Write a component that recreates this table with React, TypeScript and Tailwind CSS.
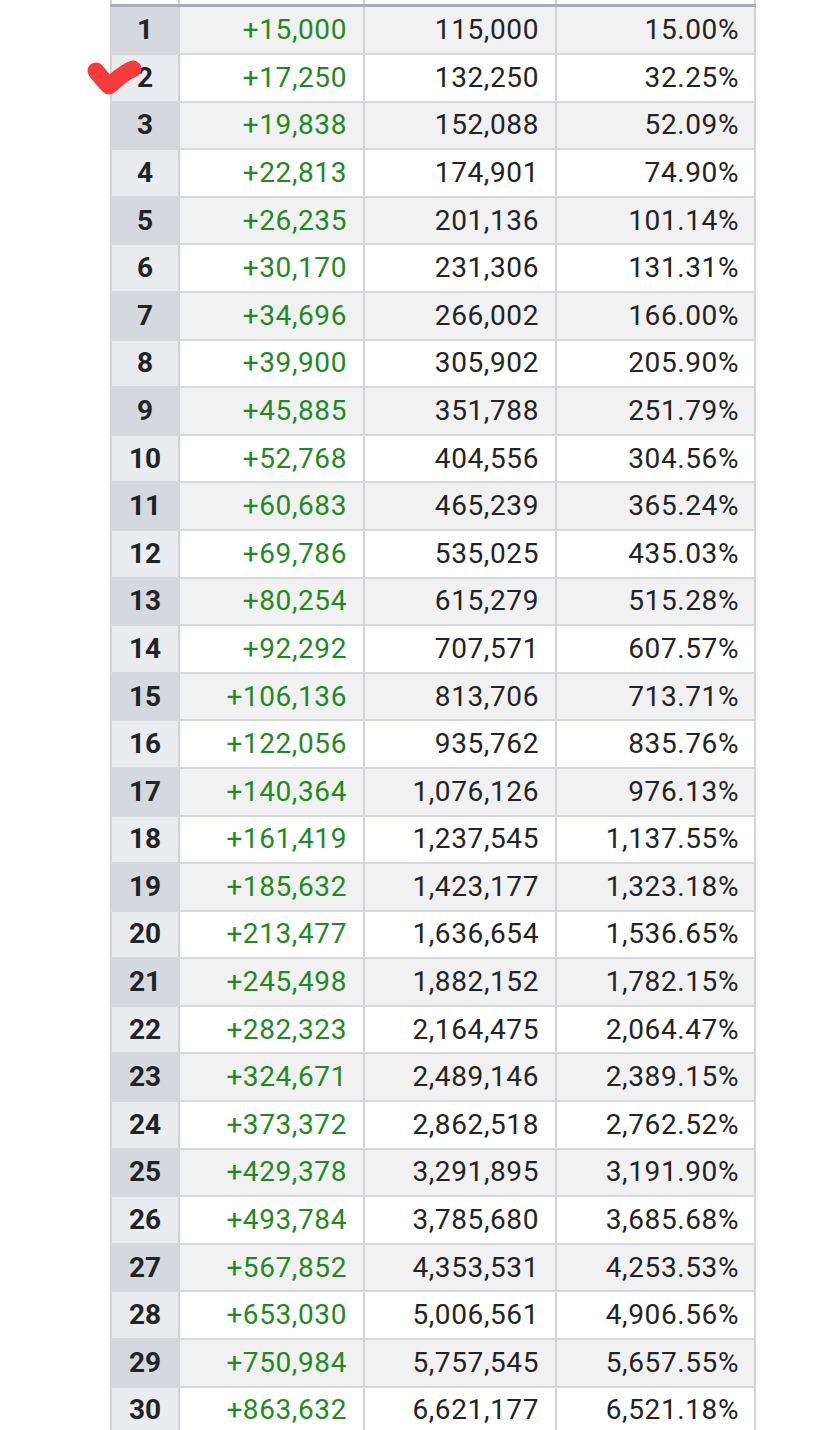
const rows: [string, string, string][] = [
  ['+15,000', '115,000', '15.00%'],
  ['+17,250', '132,250', '32.25%'],
  ['+19,838', '152,088', '52.09%'],
  ['+22,813', '174,901', '74.90%'],
  ['+26,235', '201,136', '101.14%'],
  ['+30,170', '231,306', '131.31%'],
  ['+34,696', '266,002', '166.00%'],
  ['+39,900', '305,902', '205.90%'],
  ['+45,885', '351,788', '251.79%'],
  ['+52,768', '404,556', '304.56%'],
  ['+60,683', '465,239', '365.24%'],
  ['+69,786', '535,025', '435.03%'],
  ['+80,254', '615,279', '515.28%'],
  ['+92,292', '707,571', '607.57%'],
  ['+106,136', '813,706', '713.71%'],
  ['+122,056', '935,762', '835.76%'],
  ['+140,364', '1,076,126', '976.13%'],
  ['+161,419', '1,237,545', '1,137.55%'],
  ['+185,632', '1,423,177', '1,323.18%'],
  ['+213,477', '1,636,654', '1,536.65%'],
  ['+245,498', '1,882,152', '1,782.15%'],
  ['+282,323', '2,164,475', '2,064.47%'],
  ['+324,671', '2,489,146', '2,389.15%'],
  ['+373,372', '2,862,518', '2,762.52%'],
  ['+429,378', '3,291,895', '3,191.90%'],
  ['+493,784', '3,785,680', '3,685.68%'],
  ['+567,852', '4,353,531', '4,253.53%'],
  ['+653,030', '5,006,561', '4,906.56%'],
  ['+750,984', '5,757,545', '5,657.55%'],
  ['+863,632', '6,621,177', '6,521.18%'],
];

const grid = 'grid grid-cols-[68px_185px_192px_201px]';

export default function App() {
  return (
    <div className="w-[835px] h-[1430px] overflow-hidden bg-white pl-[110px] font-['Roboto',sans-serif] text-[28px] text-[#222324]">
      <div className="relative w-[646px]">
        {/* tail of the previous row */}
        <div className={`${grid} h-[4px]`}>
          <div className="border-l-2 border-[#d0d4d9]" />
          <div className="border-l-2 border-[#d0d4d9]" />
          <div className="border-l-2 border-[#d0d4d9]" />
          <div className="border-l-2 border-r-2 border-[#d0d4d9]" />
        </div>
        <div className="h-[3px] bg-[#a9adb3]" />

        {rows.map(([gain, total, pct], i) => {
          const odd = i % 2 === 0;
          return (
            <div
              key={i}
              className={`${grid} ${i === 0 ? 'h-[48px]' : 'h-[47.6px]'} border-b-2 border-[#d5d8dc] box-border`}
            >
              <div
                className={`flex items-center justify-center border-l-2 border-[#d0d4d9] font-bold ${odd ? 'bg-[#d5d8dc]' : 'bg-[#eaecf0]'}`}
              >
                {i + 1}
              </div>
              <div
                className={`flex items-center justify-end pr-[16px] tracking-[0.6px] border-l-2 border-[#d0d4d9] text-[#1f8a24] ${odd ? 'bg-[#f1f1f1]' : 'bg-white'}`}
              >
                {gain}
              </div>
              <div
                className={`flex items-center justify-end pr-[16px] tracking-[0.6px] border-l-2 border-[#d0d4d9] ${odd ? 'bg-[#f1f1f1]' : 'bg-white'}`}
              >
                {total}
              </div>
              <div
                className={`flex items-center justify-end pr-[15px] tracking-[0.6px] border-l-2 border-r-2 border-[#d0d4d9] ${odd ? 'bg-[#f1f1f1]' : 'bg-white'}`}
              >
                {pct}
              </div>
            </div>
          );
        })}

        {/* hand-drawn check mark */}
        <svg
          className="absolute left-[-27px] top-[55px]"
          width="64"
          height="46"
          viewBox="0 0 64 46"
        >
          <path
            d="M13 16 C17 21 22 27 26 31 C33 25 41 17 50 14"
            fill="none"
            stroke="#f53b3b"
            strokeWidth="17"
            strokeLinecap="round"
            strokeLinejoin="round"
          />
        </svg>
      </div>
    </div>
  );
}
